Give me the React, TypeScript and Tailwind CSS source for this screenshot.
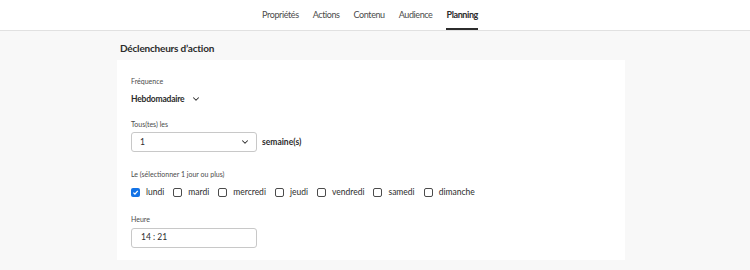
import { ChevronDown } from 'lucide-react'

const tabs = ['Propriétés', 'Actions', 'Contenu', 'Audience', 'Planning']
const days = ['lundi', 'mardi', 'mercredi', 'jeudi', 'vendredi', 'samedi', 'dimanche']

export default function App() {
  return (
    <div
      className="w-[750px] h-[270px] bg-[#f8f8f8] text-[#2c2c2c] overflow-hidden"
      style={{ fontFamily: 'Lato, "Open Sans", sans-serif' }}
    >
      {/* tabs */}
      <div className="h-[31px] bg-white border-b border-[#e1e1e1] flex justify-center">
        <div className="flex gap-[14px] pr-[10px] h-full">
          {tabs.map((t) => (
            <div
              key={t}
              className={`h-full flex items-center text-[9px] tracking-[-0.4px] border-b-2 pt-[1px] ${
                t === 'Planning' ? 'border-[#2c2c2c] font-bold text-[#2c2c2c]' : 'border-transparent text-[#4b4b4b]'
              }`}
            >
              {t}
            </div>
          ))}
        </div>
      </div>

      <div className="pl-[120px] pt-[10px]">
        <h2 className="text-[10px] tracking-[-0.2px] font-bold leading-[14px] text-[#2c2c2c]">Déclencheurs d’action</h2>

        <div className="mt-[5px] -ml-[3px] w-[508px] bg-white px-[14px] pt-[16px] pb-[12px]">
          <div className="text-[7px] text-[#4b4b4b] leading-[10px]">Fréquence</div>
          <div className="mt-[7px] flex items-center gap-[7px] text-[8.5px] tracking-[-0.2px] font-bold leading-[12px]">
            Hebdomadaire
            <ChevronDown size={10} strokeWidth={2.5} />
          </div>

          <div className="mt-[14px] text-[7px] text-[#4b4b4b] leading-[10px]">Tous(tes) les</div>
          <div className="mt-[3px] flex items-center gap-[5px]">
            <div className="w-[126px] h-[20px] border border-[#c8c8c8] rounded-[3px] flex items-center justify-between pl-[8px] pr-[6px] text-[8.5px]">
              <span>1</span>
              <ChevronDown size={10} strokeWidth={2.5} />
            </div>
            <span className="text-[8.5px] font-bold">semaine(s)</span>
          </div>

          <div className="mt-[17px] text-[7px] text-[#4b4b4b] leading-[10px]">Le (sélectionner 1 jour ou plus)</div>
          <div className="mt-[7px] flex items-center gap-[9px]">
            {days.map((d, i) => (
              <div key={d} className="flex items-center gap-[6px] text-[8.5px]">
                {i === 0 ? (
                  <span className="w-[9px] h-[9px] rounded-[2px] bg-[#1473e6] flex items-center justify-center">
                    <svg width="7" height="7" viewBox="0 0 10 10">
                      <path d="M2 5.2 L4.2 7.4 L8.2 2.6" fill="none" stroke="white" strokeWidth="1.8" />
                    </svg>
                  </span>
                ) : (
                  <span className="w-[9px] h-[9px] rounded-[2px] border-[1.5px] border-[#4b4b4b] bg-white" />
                )}
                <span>{d}</span>
              </div>
            ))}
          </div>

          <div className="mt-[15px] text-[7px] text-[#4b4b4b] leading-[10px]">Heure</div>
          <div className="mt-[4px] w-[126px] h-[20px] border border-[#c8c8c8] rounded-[3px] flex items-center pl-[9px] text-[8.5px]">
            14 : 21
          </div>
        </div>
      </div>
    </div>
  )
}
